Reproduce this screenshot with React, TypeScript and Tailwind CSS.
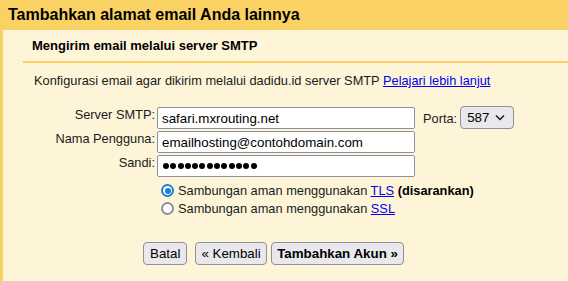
import React from "react";

const font = "font-['Liberation_Sans',Arial,sans-serif]";

const Radio = ({ checked }: { checked?: boolean }) =>
  checked ? (
    <span className="flex h-[13px] w-[13px] shrink-0 items-center justify-center rounded-full bg-[#1a7fd4]">
      <span className="flex h-[9px] w-[9px] items-center justify-center rounded-full bg-white">
        <span className="h-[6px] w-[6px] rounded-full bg-[#1a7fd4]" />
      </span>
    </span>
  ) : (
    <span className="h-[13px] w-[13px] shrink-0 rounded-full border-2 border-[#8f8f9d] bg-white" />
  );

const Field = ({ label, value, children }: { label: string; value: string; children?: React.ReactNode }) => (
  <div className="flex h-[24px] items-start">
    <div className="w-[152px] text-right leading-[15px]">{label}</div>
    <input
      readOnly
      value={value}
      className="ml-[2px] h-[22px] w-[258px] rounded-[2px] border border-[#8f8f9d] bg-white px-[4px] text-[13.33px] text-black outline-none"
    />
    {children}
  </div>
);

export default function App() {
  return (
    <div className={`flex h-[281px] w-[568px] flex-col bg-[#fef5d9] text-[12.8px] text-[#1a1a1a] ${font}`}>
      <div className="flex h-[30px] shrink-0 items-center bg-[#fad163] px-[8px] text-[16px] font-bold text-black">
        Tambahkan alamat email Anda lainnya
      </div>
      <div className="flex-1 border-l-[3px] border-[#fad163]">
        <div className="ml-[20px] flex h-[33px] items-center border-b-2 border-[#fad163] pl-[9px] text-[13px] font-bold text-black">
          Mengirim email melalui server SMTP
        </div>
        <div className="mt-[10px] pl-[31px] leading-[15px]">
          Konfigurasi email agar dikirim melalui dadidu.id server SMTP{" "}
          <a href="#" className="text-[#0000ee] underline">
            Pelajari lebih lanjut
          </a>
        </div>
        <div className="mt-[19px]">
          <Field label="Server SMTP:" value="safari.mxrouting.net">
            <span className="ml-[8px] mt-[4px] leading-[15px]">Porta:</span>
            <div className="-mt-[1px] ml-[3px] flex h-[23px] w-[54px] items-center justify-between rounded-[4px] border border-[#8f8f9d] bg-[#e9e9ed] pl-[6px] pr-[8px] text-[13.33px] text-black">
              <span>587</span>
              <svg width="10" height="7" viewBox="0 0 10 7" fill="none">
                <path d="M1 1.5 L5 5.5 L9 1.5" stroke="#1a1a1a" strokeWidth="1.5" />
              </svg>
            </div>
          </Field>
          <Field label="Nama Pengguna:" value="emailhosting@contohdomain.com" />
          <div className="flex h-[24px] items-start">
            <div className="w-[152px] text-right leading-[15px]">Sandi:</div>
            <div className="ml-[2px] flex h-[22px] w-[258px] items-center gap-[1.3px] rounded-[2px] border border-[#8f8f9d] bg-white px-[5px]">
              {Array.from({ length: 13 }).map((_, i) => (
                <span key={i} className="h-[6px] w-[6px] rounded-full bg-black" />
              ))}
            </div>
          </div>
          <div className="ml-[158px] mt-[5px] flex flex-col gap-[5px]">
            <div className="flex items-center gap-[4px] leading-[13px]">
              <Radio checked />
              <span>
                Sambungan aman menggunakan{" "}
                <a href="#" className="text-[#0000ee] underline">TLS</a>{" "}
                <b className="text-black">(disarankan)</b>
              </span>
            </div>
            <div className="flex items-center gap-[4px] leading-[13px]">
              <Radio />
              <span>
                Sambungan aman menggunakan{" "}
                <a href="#" className="text-[#0000ee] underline">SSL</a>
              </span>
            </div>
          </div>
          <div className="ml-[140px] mt-[27px] flex items-center text-[13.33px]">
            <button className="h-[23px] rounded-[4px] border border-[#8f8f9d] bg-[#e9e9ed] px-[6px] text-black">Batal</button>
            <button className="ml-[8px] h-[23px] rounded-[4px] border border-[#8f8f9d] bg-[#e9e9ed] px-[5px] text-black">« Kembali</button>
            <button className="ml-[4px] h-[23px] rounded-[4px] border border-[#8f8f9d] bg-[#e9e9ed] px-[5.5px] font-bold text-black">Tambahkan Akun »</button>
          </div>
        </div>
      </div>
    </div>
  );
}
